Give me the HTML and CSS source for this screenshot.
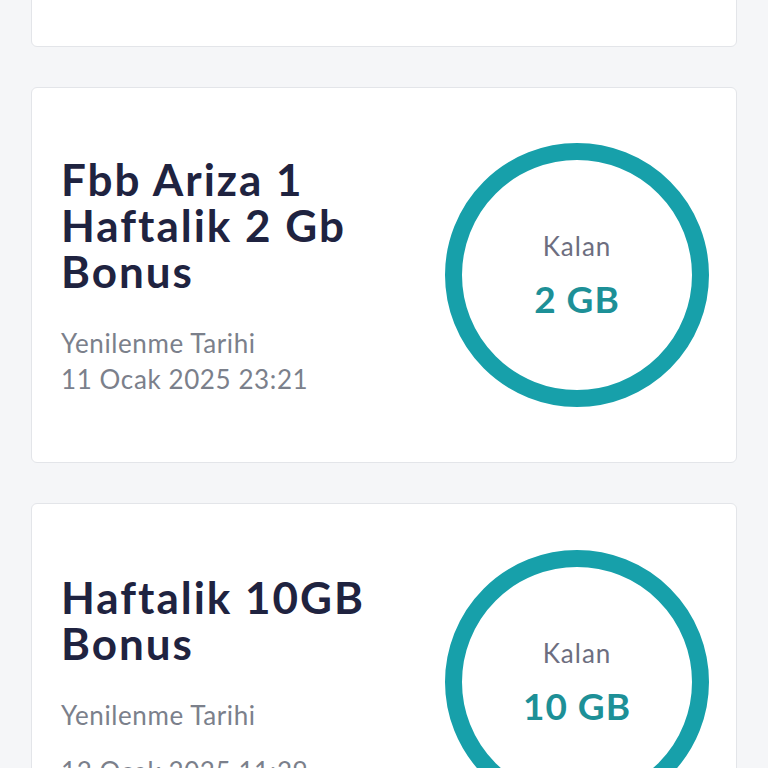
FILE: index.html
```html
<!DOCTYPE html>
<html lang="tr">
<head>
    <meta charset="UTF-8">
    <meta name="viewport" content="width=device-width, initial-scale=1.0">
    <title>Paketlerim</title>
    <link rel="stylesheet" href="styles.css">
</head>
<body>
    <div class="pkg_list">
        <div class="pkg_card">
            <div class="pkg_info">
                <h2 class="pkg_title">Haftalik 5GB<br>Sosyal Medya<br>Bonus</h2>
                <p class="pkg_date">Yenilenme Tarihi</p>
                <p class="pkg_time">10 Ocak 2025 09:12</p>
            </div>
            <div class="pkg_ring">
                <span class="ring_label">Kalan</span>
                <span class="ring_value">5 GB</span>
            </div>
        </div>
        <div class="pkg_card">
            <div class="pkg_info">
                <h2 class="pkg_title">Fbb Ariza 1<br>Haftalik 2 Gb<br>Bonus</h2>
                <p class="pkg_date">Yenilenme Tarihi</p>
                <p class="pkg_time">11 Ocak 2025 23:21</p>
            </div>
            <div class="pkg_ring">
                <span class="ring_label">Kalan</span>
                <span class="ring_value">2 GB</span>
            </div>
        </div>
        <div class="pkg_card">
            <div class="pkg_info pkg_info_long">
                <h2 class="pkg_title">Haftalik 10GB<br>Bonus</h2>
                <p class="pkg_date">Yenilenme Tarihi</p>
                <p class="pkg_time">12 Ocak 2025 11:29</p>
            </div>
            <div class="pkg_ring">
                <span class="ring_label">Kalan</span>
                <span class="ring_value">10 GB</span>
            </div>
        </div>
    </div>
</body>
</html>
```

FILE: styles.css
```css
body,h2,p{
    margin: 0;
    padding: 0;
}
body{
    background-color: #f5f6f8;
    font-family: 'Lato', 'Noto Sans', sans-serif;
    overflow: hidden;
}
.pkg_list{
    display: flex;
    flex-direction: column;
    gap: 40px;
    padding: 0 31px;
    margin-top: -329px;
}
.pkg_card{
    display: flex;
    align-items: center;
    justify-content: space-between;
    padding: 30px 27px 30px 29px;
    background-color: #fff;
    border: 1px solid #e3e5e9;
    border-radius: 6px;
}
.pkg_info{
    padding: 38px 0 35px;
}
.pkg_info_long{
    padding: 40px 0 41px;
}
.pkg_info_long .pkg_time{
    margin-top: 20px;
}
.pkg_title{
    font-size: 44px;
    line-height: 46px;
    font-weight: 700;
    letter-spacing: 2px;
    color: #1f2340;
}
.pkg_date{
    margin-top: 31px;
}
.pkg_date,.pkg_time{
    font-size: 26px;
    line-height: 36px;
    letter-spacing: 0.6px;
    color: #7b808b;
}
.pkg_ring{
    width: 264px;
    height: 264px;
    box-sizing: border-box;
    border: 17px solid #17a0aa;
    border-radius: 50%;
    display: flex;
    flex-direction: column;
    align-items: center;
    justify-content: center;
}
.ring_label{
    font-size: 26px;
    letter-spacing: 1px;
    color: #6d6e80;
}
.ring_value{
    margin-top: 14px;
    font-size: 37px;
    font-weight: 700;
    letter-spacing: 1px;
    color: #1d9097;
}
```
